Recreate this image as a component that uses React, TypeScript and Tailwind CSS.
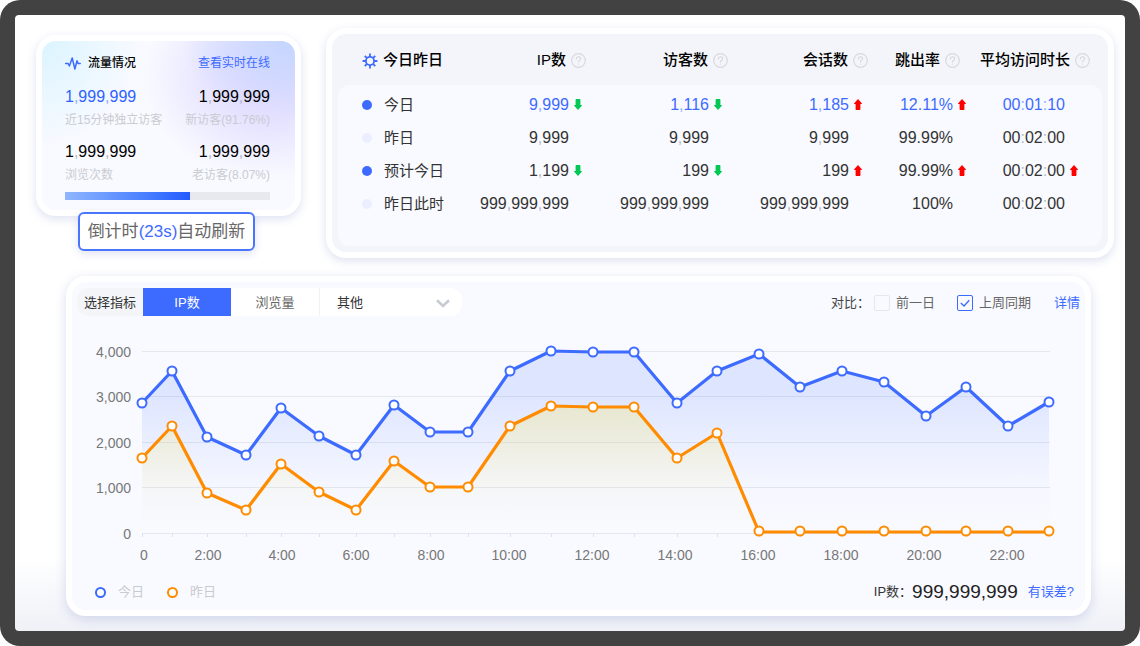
import React, { useState } from "react";
import clsx from "clsx";

type Trend = "up" | "down";

interface Cell {
	value: string;
	trend?: Trend;
}

const columns = [
	{ title: "IP数", width: "w-[120px]", head: "pr-1", cell: "pr-2" },
	{ title: "访客数", width: "w-[140px]", head: "pr-0.5", cell: "pr-2" },
	{ title: "会话数", width: "w-[140px]", head: "pr-0.5", cell: "pr-2" },
	{ title: "跳出率", width: "w-[100px]", head: "pr-2.5", cell: "pr-1" },
	{ title: "平均访问时长", width: "w-[132px]", head: "pr-3", cell: "pr-6" },
];

const rows: { label: string; active: boolean; blue: boolean; cells: Cell[] }[] = [
	{
		label: "今日",
		active: true,
		blue: true,
		cells: [
			{ value: "9,999", trend: "down" },
			{ value: "1,116", trend: "down" },
			{ value: "1,185", trend: "up" },
			{ value: "12.11%", trend: "up" },
			{ value: "00:01:10" },
		],
	},
	{
		label: "昨日",
		active: false,
		blue: false,
		cells: [
			{ value: "9,999" },
			{ value: "9,999" },
			{ value: "9,999" },
			{ value: "99.99%" },
			{ value: "00:02:00" },
		],
	},
	{
		label: "预计今日",
		active: true,
		blue: false,
		cells: [
			{ value: "1,199", trend: "down" },
			{ value: "199", trend: "down" },
			{ value: "199", trend: "up" },
			{ value: "99.99%", trend: "up" },
			{ value: "00:02:00", trend: "up" },
		],
	},
	{
		label: "昨日此时",
		active: false,
		blue: false,
		cells: [
			{ value: "999,999,999" },
			{ value: "999,999,999" },
			{ value: "999,999,999" },
			{ value: "100%" },
			{ value: "00:02:00" },
		],
	},
];

// x of every hour in the chart, then the y of both series
const hours = [
	65, 95, 130, 169, 204, 242, 279, 317, 353, 391, 433, 474, 516, 557, 600,
	640, 682, 723, 765, 807, 849, 889, 931, 972,
];
const today = [
	77, 45, 111, 129, 82, 110, 129, 79, 106, 106, 45, 25, 26, 26, 77, 45, 28,
	61, 45, 56, 90, 61, 100, 76,
];
const yesterday = [
	132, 100, 167, 184, 138, 166, 184, 135, 161, 161, 100, 80, 81, 81, 132,
	107, 206, 206, 206, 206, 206, 206, 206, 206,
];
const yAxis = [
	{ label: "4,000", y: 26 },
	{ label: "3,000", y: 71 },
	{ label: "2,000", y: 117 },
	{ label: "1,000", y: 162 },
	{ label: "0", y: 208 },
];
const xAxis = [
	{ label: "0", x: 67 },
	{ label: "2:00", x: 131 },
	{ label: "4:00", x: 205 },
	{ label: "6:00", x: 279 },
	{ label: "8:00", x: 354 },
	{ label: "10:00", x: 432 },
	{ label: "12:00", x: 515 },
	{ label: "14:00", x: 598 },
	{ label: "16:00", x: 681 },
	{ label: "18:00", x: 764 },
	{ label: "20:00", x: 847 },
	{ label: "22:00", x: 930 },
];

const toPoints = (ys: number[]) =>
	ys.map((y, i) => `${hours[i]},${y}`).join(" ");

// Number with pale separators
const Num = ({ value, blue }: { value: string; blue?: boolean }) => (
	<span>
		{value.split(/([,:])/).map((part, i) =>
			part === "," || part === ":" ? (
				<span
					key={i}
					className={blue ? "text-[#8fabff]" : "text-[#b4b7c1]"}
				>
					{part}
				</span>
			) : (
				part
			)
		)}
	</span>
);

const TrendArrow = ({ trend }: { trend?: Trend }) => (
	<span className="w-2 shrink-0">
		{trend && (
			<svg
				viewBox="0 0 8 11"
				className={clsx(
					"w-2 h-[11px]",
					trend === "up"
						? "text-[#ff0000]"
						: "text-[#00c853] rotate-180"
				)}
			>
				<path
					d="M4 0L8 4.6Q8 5 7.6 5H6.4V10.2Q6.4 11 5.6 11H2.4Q1.6 11 1.6 10.2V5H.4Q0 5 0 4.6Z"
					fill="currentColor"
				/>
			</svg>
		)}
	</span>
);

const HelpIcon = () => (
	<svg
		viewBox="0 0 15 15"
		className="w-[15px] h-[15px] shrink-0"
		fill="none"
		stroke="#d8d9df"
		strokeWidth="1.2"
		strokeLinecap="round"
	>
		<circle cx="7.5" cy="7.5" r="6.8" />
		<path d="M5.4 5.9C5.4 4.6 6.3 3.8 7.5 3.8S9.6 4.6 9.6 5.8C9.6 7.2 7.5 7.2 7.5 8.9" />
		<path d="M7.5 11V11.1" />
	</svg>
);

const GearIcon = () => (
	<svg
		viewBox="0 0 16 16"
		className="w-4 h-4"
		fill="none"
		stroke="#3d6bff"
		strokeWidth="1.8"
	>
		<circle cx="8" cy="8" r="4.1" />
		{[0, 45, 90, 135, 180, 225, 270, 315].map((angle) => (
			<path
				key={angle}
				d="M8 3.8V.6"
				transform={`rotate(${angle} 8 8)`}
			/>
		))}
	</svg>
);

const Stat = ({
	value,
	label,
	blue,
	right,
}: {
	value: string;
	label: string;
	blue?: boolean;
	right?: boolean;
}) => (
	<div className={right ? "text-right" : ""}>
		<p
			className={clsx(
				"text-base leading-6",
				blue ? "text-[#2f62ff]" : "text-black"
			)}
		>
			<Num value={value} blue={blue} />
		</p>
		<p className="text-xs leading-[22px] text-[#c9cbd2]">{label}</p>
	</div>
);

const TrafficCard = () => (
	<section className="relative w-[265px] shrink-0 mt-[7px] rounded-[20px] border-6 border-white bg-white shadow-[0_3px_10px_rgba(70,90,180,0.18)]">
		<div className="rounded-[14px] pt-3 pb-2.5 pl-[23px] pr-[25px] bg-[#f9faff] bg-[radial-gradient(ellipse_40%_65%_at_0%_0%,#dbf4ff_0%,transparent_100%),radial-gradient(ellipse_45%_45%_at_100%_0%,#c3d5ff_0%,transparent_100%),radial-gradient(ellipse_50%_60%_at_90%_22%,#dedaff_0%,#e4e1ff_40%,transparent_100%)]">
			<div className="flex items-center justify-between leading-5 text-xs">
				<h2 className="flex items-center gap-[7px] font-medium text-black">
					<svg
						viewBox="0 0 16 13"
						className="w-4 h-[13px]"
						fill="none"
						stroke="#3d6bff"
						strokeWidth="1.5"
						strokeLinejoin="round"
						strokeLinecap="round"
					>
						<path d="M.6 6.4H3L4.4 9L7.2 1L9.9 12L12 3.8L13 6.4H15.2" />
					</svg>
					流量情况
				</h2>
				<a href="#realtime" className="text-[#3d6bff]">
					查看实时在线
				</a>
			</div>
			<div className="mt-3 flex justify-between">
				<Stat value="1,999,999" label="近15分钟独立访客" blue />
				<Stat value="1,999,999" label="新访客(91.76%)" right />
			</div>
			<div className="mt-[9px] flex justify-between">
				<Stat value="1,999,999" label="浏览次数" />
				<Stat value="1,999,999" label="老访客(8.07%)" right />
			</div>
			<div className="mt-1.5 h-2 bg-[#e8e9ee]">
				<div className="h-full w-[61%] bg-linear-to-r from-[#90b6ff] to-[#2459ff]" />
			</div>
		</div>
		{/* Countdown */}
		<div className="absolute left-9 top-[171px] w-[177px] h-[39px] flex items-center justify-center rounded-md border-2 border-[#4a76ff] bg-white text-[17px] text-[#666] whitespace-nowrap shadow-[0_3px_8px_rgba(70,90,180,0.16)]">
			<span>
				倒计时<span className="text-[#3d6bff]">(23s)</span>自动刷新
			</span>
		</div>
	</section>
);

const SummaryTable = () => (
	<section className="flex-1 rounded-[20px] border-6 border-white bg-[#f4f5fa] px-1.5 pb-1.5 shadow-[0_3px_10px_rgba(70,90,180,0.18)]">
		<table className="w-full table-fixed border-separate border-spacing-0">
			<colgroup>
				<col className="w-[132px]" />
				{columns.map((col) => (
					<col key={col.title} className={col.width} />
				))}
			</colgroup>
			<thead>
				<tr className="h-[51px] text-[15px] text-black">
					<th className="p-0 pt-0.5 pl-6 font-medium">
						<div className="flex items-center gap-[5px]">
							<GearIcon />
							今日昨日
						</div>
					</th>
					{columns.map((col) => (
						<th
							key={col.title}
							className={clsx("pl-0 pb-0 pt-0.5 font-medium", col.head)}
						>
							<div className="flex items-center justify-end gap-[5px] whitespace-nowrap">
								{col.title}
								<HelpIcon />
							</div>
						</th>
					))}
				</tr>
			</thead>
			<tbody>
				{rows.map((row, r) => {
					const edge = clsx(
						"bg-[#f9faff]",
						r === 0 &&
							"pt-[3px] first:rounded-tl-xl last:rounded-tr-xl",
						r === rows.length - 1 &&
							"pb-[26px] first:rounded-bl-xl last:rounded-br-xl"
					);
					return (
						<tr key={row.label} className="leading-[33px]">
							<td className={clsx("pl-6", edge)}>
								<div className="flex items-center gap-3 text-[15px] text-[#333]">
									<span
										className={clsx(
											"w-2.5 h-2.5 rounded-full",
											row.active
												? "bg-[#3d6bff]"
												: "bg-[#ebeeff]"
										)}
									/>
									{row.label}
								</div>
							</td>
							{row.cells.map((cell, c) => (
								<td
									key={c}
									className={clsx(edge, columns[c].cell)}
								>
									<div
										className={clsx(
											"h-[33px] flex items-center justify-end gap-[5px] text-base",
											row.blue
												? "text-[#3d6bff]"
												: "text-[#333]"
										)}
									>
										<Num value={cell.value} blue={row.blue} />
										<TrendArrow trend={cell.trend} />
									</div>
								</td>
							))}
						</tr>
					);
				})}
			</tbody>
		</table>
	</section>
);

const Check = ({
	id,
	label,
	checked,
	onChange,
}: {
	id: string;
	label: string;
	checked: boolean;
	onChange: (checked: boolean) => void;
}) => (
	<div className="flex items-center gap-1.5 text-[#666]">
		<span className="grid">
			<input
				type="checkbox"
				id={id}
				name={id}
				checked={checked}
				onChange={(e) => onChange(e.target.checked)}
				className="col-start-1 row-start-1 appearance-none w-4 h-4 rounded-xs border border-[#e6e7ec] checked:border-[#3d6bff]"
			/>
			{checked && (
				<svg
					viewBox="0 0 16 16"
					className="col-start-1 row-start-1 w-4 h-4 pointer-events-none"
					fill="none"
					stroke="#3d6bff"
					strokeWidth="1.3"
				>
					<path d="M3.8 8L7 11L12.3 5.2" />
				</svg>
			)}
		</span>
		<label htmlFor={id}>{label}</label>
	</div>
);

const Series = ({
	ys,
	color,
	fill,
}: {
	ys: number[];
	color: string;
	fill: string;
}) => (
	<g>
		<polygon points={`65,207 ${toPoints(ys)} 972,207`} fill={fill} />
		<polyline
			points={toPoints(ys)}
			fill="none"
			stroke={color}
			strokeWidth="3.2"
			strokeLinejoin="round"
		/>
		{ys.map((y, i) => (
			<circle
				key={i}
				cx={hours[i]}
				cy={Math.min(y, 205)}
				r="4.5"
				fill="#fff"
				stroke={color}
				strokeWidth="2"
			/>
		))}
	</g>
);

const LineChart = () => (
	<svg viewBox="0 0 1003 244" className="mt-2.5 w-full block">
		<defs>
			<linearGradient
				id="todayFill"
				gradientUnits="userSpaceOnUse"
				x1="0"
				y1="26"
				x2="0"
				y2="207"
			>
				<stop offset="0" stopColor="#3d6bff" stopOpacity="0.15" />
				<stop offset="0.25" stopColor="#3d6bff" stopOpacity="0.14" />
				<stop offset="0.75" stopColor="#3d6bff" stopOpacity="0.02" />
				<stop offset="1" stopColor="#3d6bff" stopOpacity="0" />
			</linearGradient>
			<linearGradient
				id="yesterdayFill"
				gradientUnits="userSpaceOnUse"
				x1="0"
				y1="80"
				x2="0"
				y2="207"
			>
				<stop offset="0" stopColor="#ffe63c" stopOpacity="0.24" />
				<stop offset="0.7" stopColor="#ffe63c" stopOpacity="0.03" />
				<stop offset="1" stopColor="#ffe63c" stopOpacity="0" />
			</linearGradient>
		</defs>
		{yAxis.map((tick) => (
			<g key={tick.label}>
				<path
					d={`M65 ${tick.y - 0.5}H973`}
					stroke="#e5e7ef"
					strokeWidth="1"
				/>
				<text
					x="54"
					y={tick.y + 5}
					textAnchor="end"
					fontSize="14"
					fill="#777"
				>
					{tick.label}
				</text>
			</g>
		))}
		{hours.map((x) => (
			<path key={x} d={`M${x + 0.5} 208V211`} stroke="#dfe2ec" />
		))}
		{xAxis.map((tick) => (
			<text
				key={tick.label}
				x={tick.x}
				y="234"
				textAnchor="middle"
				fontSize="14"
				fill="#777"
			>
				{tick.label}
			</text>
		))}
		<Series ys={today} color="#3d6bff" fill="url(#todayFill)" />
		<Series ys={yesterday} color="#ff8c00" fill="url(#yesterdayFill)" />
	</svg>
);

const ChartCard = () => {
	const [metric, setMetric] = useState("IP数");
	const [fields, setFields] = useState<{
		prevDay: boolean;
		lastWeek: boolean;
	}>({
		prevDay: false,
		lastWeek: true,
	});

	return (
		<section className="mt-[18px] ml-[30px] mr-[23px] rounded-[20px] border-6 border-white bg-[#f9faff] px-[5px] pt-1.5 pb-1 shadow-[0_3px_12px_rgba(70,90,180,0.2)] text-[13px]">
			<div className="flex items-center justify-between">
				{/* Metric */}
				<div className="flex h-7 rounded-xl overflow-hidden bg-white">
					<span className="w-[66px] pt-0.5 flex items-center justify-center bg-[#f4f5f9] text-[#333]">
						选择指标
					</span>
					{["IP数", "浏览量"].map((name) => (
						<button
							key={name}
							type="button"
							onClick={() => setMetric(name)}
							className={clsx(
								"w-[88px] pt-0.5",
								metric === name
									? "bg-[#3d6bff] text-white"
									: "text-[#666]"
							)}
						>
							{name}
						</button>
					))}
					<div className="relative w-[143px] border-l border-[#f1f2f6]">
						<select
							aria-label="其他"
							className="appearance-none w-full h-full pt-0.5 pl-[17px] text-[#333] focus:outline-none"
						>
							<option>其他</option>
						</select>
						<svg
							viewBox="0 0 14 9"
							className="absolute right-3 top-[11px] w-3.5 h-[9px] pointer-events-none"
							fill="none"
							stroke="#c8cad4"
							strokeWidth="2.6"
						>
							<path d="M1 1.2L7 7L13 1.2" />
						</svg>
					</div>
				</div>
				{/* Compare */}
				<div className="flex items-center pt-0.5">
					<span className="mr-1 text-[#444]">对比：</span>
					<Check
						id="prevDay"
						label="前一日"
						checked={fields.prevDay}
						onChange={(prevDay) =>
							setFields({ ...fields, prevDay })
						}
					/>
					<div className="ml-[22px] mr-[23px]">
						<Check
							id="lastWeek"
							label="上周同期"
							checked={fields.lastWeek}
							onChange={(lastWeek) =>
								setFields({ ...fields, lastWeek })
							}
						/>
					</div>
					<a href="#detail" className="text-[#3d6bff]">
						详情
					</a>
				</div>
			</div>
			<LineChart />
			{/* Legend */}
			<div className="mt-2 h-7 pl-[18px] pr-1.5 flex items-center justify-between">
				<div className="flex items-center gap-[23px] text-[#c9cbd2]">
					<span className="flex items-center gap-3">
						<span className="w-[11px] h-[11px] rounded-full border-2 border-[#3d6bff] bg-white" />
						今日
					</span>
					<span className="flex items-center gap-3">
						<span className="w-[11px] h-[11px] rounded-full border-2 border-[#ff8c00] bg-white" />
						昨日
					</span>
				</div>
				<div className="flex items-center text-[#333]">
					<span>IP数：</span>
					<span className="text-[19px] text-[#222]">999,999,999</span>
					<a href="#accuracy" className="ml-2.5 text-[#3d6bff]">
						有误差?
					</a>
				</div>
			</div>
		</section>
	);
};

const App = () => {
	return (
		<div className="min-h-screen flex flex-col rounded-[20px] bg-[#424242] p-[15px] font-['Liberation_Sans','Noto_Sans_CJK_SC',sans-serif]">
			<main className="flex-1 rounded-sm overflow-hidden bg-linear-to-b from-white from-88% to-[#eff1f7] pt-[13px] pl-[21px] pr-[11px] pb-[15px]">
				<div className="flex items-start gap-[25px]">
					<TrafficCard />
					<SummaryTable />
				</div>
				<ChartCard />
			</main>
		</div>
	);
};

export default App;
